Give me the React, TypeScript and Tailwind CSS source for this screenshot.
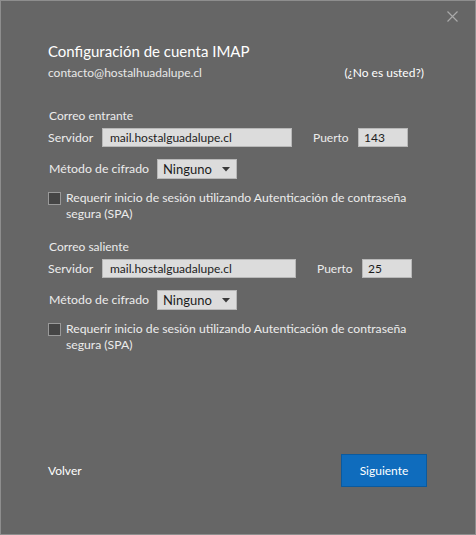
import React from "react";

function CheckRow() {
  return (
    <div className="flex items-start mt-[13px]">
      <div className="w-[13px] h-[13px] bg-[#454545] border border-[#9a9a9a] shrink-0" />
      <div className="ml-[5px] w-[350px] text-[12.2px] leading-[16px] mt-[-2px]">
        Requerir inicio de sesión utilizando Autenticación de contraseña segura (SPA)
      </div>
    </div>
  );
}

function Section({ title, srvW, port }: { title: string; srvW: string; port: string }) {
  return (
    <div className="flex flex-col">
      <div className="text-[12px] leading-[18px] pl-[1px] whitespace-nowrap">{title}</div>
      <div className="flex items-center mt-[3px]">
        <div className="w-[54px] text-[12.3px] leading-[18px] whitespace-nowrap">Servidor</div>
        <div className={`${srvW} h-[19px] bg-[#dcdcdc] border border-[#b8b8b8] text-[12px] leading-[17px] text-[#1c1c1c] pl-[7px] whitespace-nowrap`}>
          mail.hostalguadalupe.cl
        </div>
        <div className="ml-[21px] w-[45px] text-[12px] leading-[18px] whitespace-nowrap">Puerto</div>
        <div className="w-[50px] h-[19px] bg-[#dcdcdc] border border-[#b8b8b8] text-[12px] leading-[17px] text-[#1c1c1c] pl-[5px]">
          {port}
        </div>
      </div>
      <div className="flex items-center mt-[12px]">
        <div className="w-[109px] text-[12.3px] leading-[18px] pl-[1px] whitespace-nowrap">Método de cifrado</div>
        <div className="w-[80px] h-[20px] bg-[#dcdcdc] border border-[#b8b8b8] text-[13px] leading-[18px] text-[#1c1c1c] pl-[5px] flex items-center justify-between pr-[6px]">
          <span>Ninguno</span>
          <svg width="8" height="5" viewBox="0 0 8 5"><path d="M0 0h8L4 4.5z" fill="#3a3a3a" /></svg>
        </div>
      </div>
      <CheckRow />
    </div>
  );
}

export default function App() {
  return (
    <div className="w-[476px] h-[535px] bg-[#666666] border border-[#8e8e8e] flex flex-col text-[#ececec] font-['Lato',sans-serif]">
      <div className="flex justify-end pt-[10px] pr-[17px]">
        <svg width="11" height="11" viewBox="0 0 11 11">
          <path d="M0.5 0.5L10.5 10.5M10.5 0.5L0.5 10.5" stroke="#a9a9a9" strokeWidth="1.2" />
        </svg>
      </div>
      <div className="flex flex-col pl-[47px] pr-[47px] flex-1">
        <div className="mt-[16px] text-[15px] leading-[26px] text-white whitespace-nowrap">Configuración de cuenta IMAP</div>
        <div className="flex justify-between items-center mt-[1px] text-[12px] leading-[16px]">
          <span className="text-[#e8e8e8]">contacto@hostalhuadalupe.cl</span>
          <span className="text-white mr-[4px]">(¿No es usted?)</span>
        </div>
        <div className="mt-[26px]">
          <Section title="Correo entrante" srvW="w-[190px]" port="143" />
        </div>
        <div className="mt-[16px]">
          <Section title="Correo saliente" srvW="w-[194px]" port="25" />
        </div>
        <div className="mt-auto mb-[47px] flex items-center justify-between">
          <span className="text-[12px] text-white">Volver</span>
          <button className="w-[86px] h-[33px] bg-[#0f6cbd] border border-[#0b5a9e] text-white text-[12px] mr-[1px]">
            Siguiente
          </button>
        </div>
      </div>
    </div>
  );
}
